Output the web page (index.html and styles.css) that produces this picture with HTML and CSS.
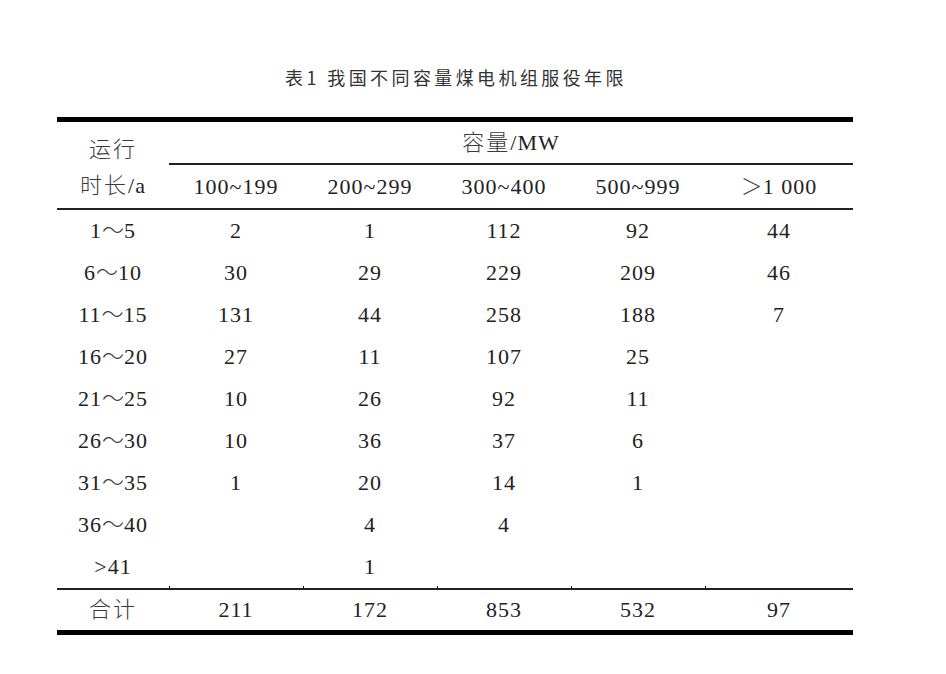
FILE: index.html
```html
<!DOCTYPE html>
<html lang="zh">
<head>
<meta charset="utf-8">
<title>表1 我国不同容量煤电机组服役年限</title>
<link rel="stylesheet" href="styles.css">
</head>
<body>
<div class="wrap">
  <div class="title">表1 我国不同容量煤电机组服役年限</div>
  <table class="data">
    <colgroup>
      <col class="c0"><col class="c1"><col class="c1"><col class="c1"><col class="c1"><col class="c5">
    </colgroup>
    <thead>
      <tr class="h1">
        <th rowspan="2" class="stub"><span class="cjk">运行</span><br><span class="cjk">时长</span>/a</th>
        <th colspan="5" class="group"><span class="cjk">容量</span>/MW</th>
      </tr>
      <tr class="h2">
        <th>100~199</th>
        <th>200~299</th>
        <th>300~400</th>
        <th>500~999</th>
        <th><span class="gt">＞</span>1 000</th>
      </tr>
    </thead>
    <tbody>
      <tr><td>1<span class="w">～</span>5</td><td>2</td><td>1</td><td>112</td><td>92</td><td>44</td></tr>
      <tr><td>6<span class="w">～</span>10</td><td>30</td><td>29</td><td>229</td><td>209</td><td>46</td></tr>
      <tr><td>11<span class="w">～</span>15</td><td>131</td><td>44</td><td>258</td><td>188</td><td>7</td></tr>
      <tr><td>16<span class="w">～</span>20</td><td>27</td><td>11</td><td>107</td><td>25</td><td></td></tr>
      <tr><td>21<span class="w">～</span>25</td><td>10</td><td>26</td><td>92</td><td>11</td><td></td></tr>
      <tr><td>26<span class="w">～</span>30</td><td>10</td><td>36</td><td>37</td><td>6</td><td></td></tr>
      <tr><td>31<span class="w">～</span>35</td><td>1</td><td>20</td><td>14</td><td>1</td><td></td></tr>
      <tr><td>36<span class="w">～</span>40</td><td></td><td>4</td><td>4</td><td></td><td></td></tr>
      <tr class="last"><td>&gt;41</td><td class="tick"></td><td class="tick">1</td><td class="tick"></td><td class="tick"></td><td class="tick"></td></tr>
    </tbody>
    <tfoot>
      <tr><td><span class="cjk">合计</span></td><td>211</td><td>172</td><td>853</td><td>532</td><td>97</td></tr>
    </tfoot>
  </table>
</div>
</body>
</html>
```
FILE: styles.css
```css
html, body {
  margin: 0;
  padding: 0;
  background: #fff;
}

.wrap {
  margin-left: 57px;
  width: 796px;
  padding-top: 65px;
}

.title {
  font-family: "Noto Sans CJK SC", "Noto Sans", sans-serif;
  font-size: 18px;
  line-height: 24px;
  letter-spacing: 3.4px;
  color: #333;
  text-align: center;
  padding-left: 2px;
}

.data {
  margin-top: 28px;
  width: 796px;
  table-layout: fixed;
  border-collapse: separate;
  border-spacing: 0;
  border-top: 5px solid #000;
  border-bottom: 5px solid #000;
  font-family: "Liberation Serif", "Noto Sans CJK SC", serif;
  font-size: 22px;
  line-height: 24px;
  letter-spacing: 1px;
  color: #222;
}

.c0 { width: 112px; }
.c1 { width: 134px; }
.c5 { width: 148px; }

.data th,
.data td {
  padding: 0;
  text-align: center;
  font-weight: normal;
  vertical-align: middle;
}

.cjk {
  font-family: "Noto Sans CJK SC", sans-serif;
  font-weight: 300;
  color: #3a3a3a;
  letter-spacing: 2px;
  line-height: 0;
}

.w,
.gt {
  font-family: "Noto Sans CJK SC", sans-serif;
  font-weight: 300;
  color: #3a3a3a;
  letter-spacing: 0;
  line-height: 0;
}

.h1 th { height: 41px; }

.stub {
  line-height: 36px;
  border-bottom: 2px solid #222;
  padding-top: 6px !important;
}

.group {
  border-bottom: 2px solid #222;
}

.h2 th {
  height: 43px;
  border-bottom: 2px solid #222;
}

.data tbody td {
  height: 42px;
}

.data tbody tr.last td {
  border-bottom: 2px solid #222;
}

.data td.tick {
  position: relative;
}

.data td.tick::before {
  content: "";
  position: absolute;
  left: 0;
  bottom: 0;
  width: 1px;
  height: 2px;
  background: #111;
}

.data tfoot td {
  height: 40px;
}
```
